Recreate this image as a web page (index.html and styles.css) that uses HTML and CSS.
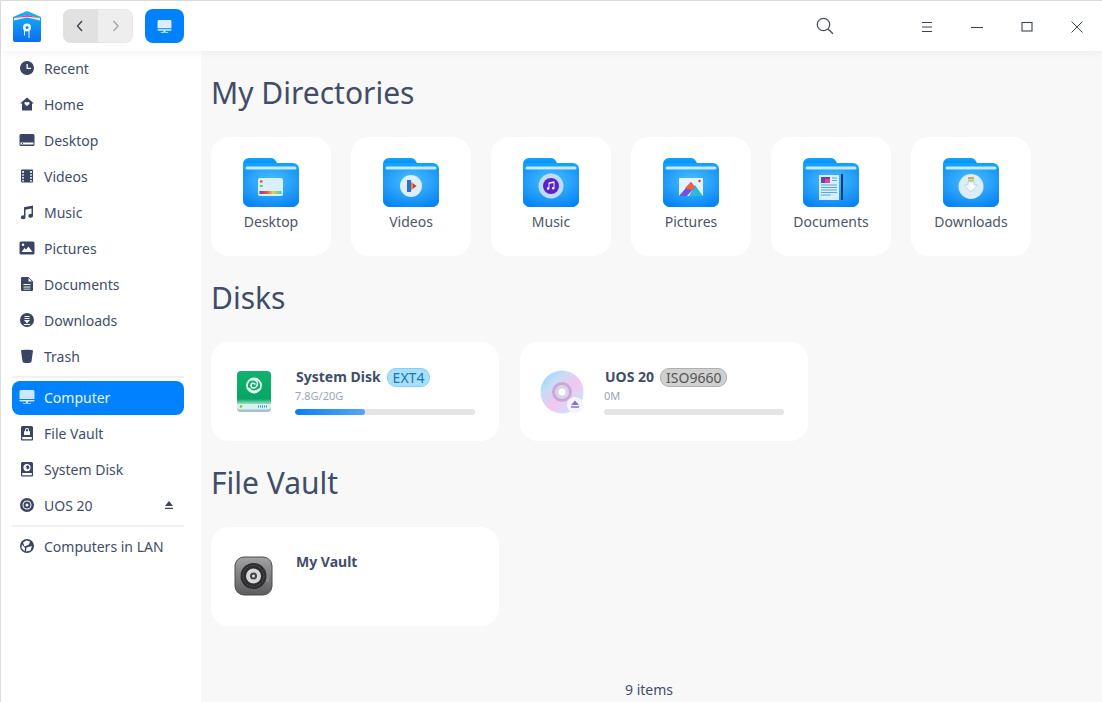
FILE: index.html
```html
<!DOCTYPE html>
<html lang="en">
<head>
<meta charset="utf-8">
<title>File Manager</title>
<link rel="stylesheet" href="styles.css">
</head>
<body>
<svg class="defs" width="0" height="0" aria-hidden="true">
  <defs>
    <linearGradient id="folderBack" x1="0" y1="0" x2="0" y2="1"><stop offset="0" stop-color="#12a4fb"/><stop offset="1" stop-color="#0a8cf5"/></linearGradient>
    <radialGradient id="folderFront" cx="0.5" cy="0.3" r="0.75"><stop offset="0" stop-color="#4cc0ff"/><stop offset="1" stop-color="#0684f4"/></radialGradient>
    <linearGradient id="rainbow" x1="0" x2="1"><stop offset="0" stop-color="#7a3bd0"/><stop offset=".35" stop-color="#e8603a"/><stop offset=".6" stop-color="#d8d83a"/><stop offset="1" stop-color="#3ac8e0"/></linearGradient>
    <linearGradient id="green" x1="0" y1="0" x2="0" y2="1"><stop offset="0" stop-color="#12b26c"/><stop offset=".68" stop-color="#07a566"/><stop offset=".84" stop-color="#c5efdd"/><stop offset="1" stop-color="#d8f2ea"/></linearGradient>
    <linearGradient id="disc" x1="0" y1="0" x2="1" y2="1"><stop offset="0" stop-color="#84d8f8"/><stop offset=".3" stop-color="#c8dcf6"/><stop offset=".55" stop-color="#f6c4ee"/><stop offset=".8" stop-color="#cfe0f6"/><stop offset="1" stop-color="#8ce6f4"/></linearGradient>
    <linearGradient id="steel" x1="0" y1="0" x2="0" y2="1"><stop offset="0" stop-color="#a2a2a4"/><stop offset="1" stop-color="#5c5c5e"/></linearGradient>
    <linearGradient id="logo" x1="0" y1="0" x2="0" y2="1"><stop offset="0" stop-color="#16b4fa"/><stop offset="1" stop-color="#0a6cf0"/></linearGradient>
    <symbol id="folder" viewBox="0 0 56 49">
      <path d="M0 6a6 6 0 0 1 6-6h22c2.500 0 3.500 1 4.500 2.500L34 5h-34z" fill="url(#folderBack)"/>
      <path d="M0 5h50a6 6 0 0 1 6 6v31a7 7 0 0 1-7 7H7a7 7 0 0 1-7-7z" fill="url(#folderBack)"/>
      <rect x="2.500" y="8.500" width="51" height="3" rx="1.500" fill="#c8e9ff"/>
      <path d="M0 12h56v30a7 7 0 0 1-7 7H7a7 7 0 0 1-7-7z" fill="url(#folderFront)"/>
    </symbol>
    <symbol id="monitor" viewBox="0 0 16 14">
      <path d="M2 0h12a1.500 1.500 0 0 1 1.500 1.500V9H.5V1.500A1.500 1.500 0 0 1 2 0zM.5 10h15v.5a1 1 0 0 1-1 1h-13a1 1 0 0 1-1-1zM7 11.500h2V13H7zM4 13h8v.8H4z" fill="currentColor"/>
    </symbol>
  </defs>
</svg>
<div class="window">
  <header class="titlebar">
    <svg class="logo" width="28" height="31" viewBox="0 0 28 31">
      <path d="M0 6 12.500.5c1-.4 2-.4 3 0L28 6v23a2 2 0 0 1-2 2H2a2 2 0 0 1-2-2z" fill="url(#logo)"/>
      <path d="M1 7 14 4l13 3v2.500L14 6.500 1 9.500z" fill="#f3e6ee"/>
      <path d="M1 7 14 4l13 3-13-1.200z" fill="#d8447c"/>
      <circle cx="14" cy="16.500" r="4" fill="#f2fbff"/>
      <circle cx="14" cy="16.500" r="1.500" fill="#1b88ee"/>
      <path d="M11.500 19.500v5M16 20v7" stroke="#e9f6ff" stroke-width="1" fill="none"/>
    </svg>
    <div class="nav">
      <button class="nav-btn nav-active" type="button"><svg width="10" height="14" viewBox="0 0 10 14"><path d="M6 2 1.500 7 6 12" fill="none" stroke="#3c4658" stroke-width="1.400"/></svg></button>
      <button class="nav-btn" type="button"><svg width="10" height="14" viewBox="0 0 10 14"><path d="M2.500 2 7 7l-4.500 5" fill="none" stroke="#a3a7ad" stroke-width="1.400"/></svg></button>
    </div>
    <div class="crumb"><svg class="crumb-icon" width="15" height="13"><use href="#monitor" width="15" height="13"/></svg></div>
    <div class="title-actions">
      <svg class="search" width="18" height="18" viewBox="0 0 18 18"><circle cx="7.500" cy="7.500" r="6.200" fill="none" stroke="#4a5260" stroke-width="1.300"/><path d="m12 12 5 4.800" stroke="#4a5260" stroke-width="1.500"/></svg>
      <svg class="win-ico ico-menu" width="12" height="12" viewBox="0 0 12 12"><path d="M1 1.500h10M1 6h10M1 10.500h10" stroke="#3d4552" stroke-width="1"/></svg>
      <svg class="win-ico ico-min" width="12" height="12" viewBox="0 0 12 12"><path d="M0 6.500h12" stroke="#3d4552" stroke-width="1.100"/></svg>
      <svg class="win-ico ico-max" width="12" height="12" viewBox="0 0 12 12"><rect x="1" y="1.500" width="10" height="8.500" fill="none" stroke="#3d4552" stroke-width="1.100"/></svg>
      <svg class="win-ico ico-close" width="14" height="14" viewBox="0 0 14 14"><path d="m1.500 1.500 11 11m0-11-11 11" stroke="#3d4552" stroke-width="1"/></svg>
    </div>
  </header>
  <div class="content">
    <nav class="sidebar">
      <a class="side-item"><svg class="side-ico" viewBox="0 0 16 16"><path fill-rule="evenodd" d="M8 1a7 7 0 1 1 0 14A7 7 0 0 1 8 1zM7.500 4v5H12V7.800H8.800V4z"/></svg>Recent</a>
      <a class="side-item"><svg class="side-ico" viewBox="0 0 16 16"><path fill-rule="evenodd" d="M8 1.500 15 7.500h-2V14.500H3V7.500H1zM8 6.500c-1-1-3-.5-2.500 1 .3 1 1.500 1.700 2.500 2.500 1-.8 2.200-1.500 2.500-2.500.5-1.500-1.500-2-2.500-1z"/></svg>Home</a>
      <a class="side-item"><svg class="side-ico" viewBox="0 0 16 16"><path fill-rule="evenodd" d="M2 2h12a1.500 1.500 0 0 1 1.500 1.500v9A1.500 1.500 0 0 1 14 14H2a1.500 1.500 0 0 1-1.500-1.500v-9A1.500 1.500 0 0 1 2 2zM1.500 10.500v2h13v-2zM3 11h1v1H3z"/></svg>Desktop</a>
      <a class="side-item"><svg class="side-ico" viewBox="0 0 16 16"><path fill-rule="evenodd" d="M3 1.500h10a1 1 0 0 1 1 1v11a1 1 0 0 1-1 1H3a1 1 0 0 1-1-1v-11a1 1 0 0 1 1-1zM3.200 3v2h1.600V3zm0 3.200v1.600h1.600V6.200zm0 2.800v1.800h1.600V9zm0 3v1.500h1.600V12zm8-9v2h1.600V3zm0 3.200v1.600h1.600V6.200zm0 2.800v1.800h1.600V9zm0 3v1.500h1.600V12z"/></svg>Videos</a>
      <a class="side-item"><svg class="side-ico" viewBox="0 0 16 16"><path d="M5 3.200 14 1.500v10.200a2.300 2 0 1 1-1.500-1.800V4.500L6.500 5.700v7.500a2.300 2 0 1 1-1.500-1.800z"/></svg>Music</a>
      <a class="side-item"><svg class="side-ico" viewBox="0 0 16 16"><path fill-rule="evenodd" d="M2 1.500h12a1.500 1.500 0 0 1 1.500 1.500v10a1.500 1.500 0 0 1-1.500 1.500H2A1.500 1.500 0 0 1 .5 13V3A1.500 1.500 0 0 1 2 1.500zM2.500 12h11L9.500 6.500l-2.500 3-1.500-1.500zM4 3.500a1.300 1.300 0 1 0 0 2.600 1.300 1.300 0 0 0 0-2.600z"/></svg>Pictures</a>
      <a class="side-item"><svg class="side-ico" viewBox="0 0 16 16"><path fill-rule="evenodd" d="M3 1h6.500L14 5.500V14a1 1 0 0 1-1 1H3a1 1 0 0 1-1-1V2a1 1 0 0 1 1-1zM9.500 2v3.500H13zM4.500 8v1h7V8zm0 2.500v1h7v-1zm0 2.200v.9h7v-.9z"/></svg>Documents</a>
      <a class="side-item"><svg class="side-ico" viewBox="0 0 16 16"><path fill-rule="evenodd" d="M8 1a7 7 0 1 1 0 14A7 7 0 0 1 8 1zM5.500 4v1h5V4zm0 2v1h5V6zM5 8l3 3.500L11 8zm-.2 4v.9h6.400V12z"/></svg>Downloads</a>
      <a class="side-item"><svg class="side-ico" viewBox="0 0 16 16"><path d="M2 2.500c0-1 12-1 12 0L12.500 13.500c-.3 2-8.700 2-9 0z"/></svg>Trash</a>
      <div class="side-sep"></div>
      <a class="side-item side-active"><svg class="side-ico" viewBox="0 0 16 14"><use href="#monitor"/></svg>Computer</a>
      <a class="side-item"><svg class="side-ico" viewBox="0 0 16 16"><path fill-rule="evenodd" d="M3.500 1h9A1.500 1.500 0 0 1 14 2.500v12a1 1 0 0 1-1 1H3a1 1 0 0 1-1-1v-12A1.500 1.500 0 0 1 3.500 1zM8 3a2 2 0 0 0-2 2v1.200H5V10h6V6.200h-1V5a2 2 0 0 0-2-2zm0 1a1 1 0 0 1 1 1v1.200H7V5a1 1 0 0 1 1-1zM3.200 12v2.200h9.600V12z"/></svg>File Vault</a>
      <a class="side-item"><svg class="side-ico" viewBox="0 0 16 16"><path fill-rule="evenodd" d="M3.500 1h9A1.500 1.500 0 0 1 14 2.500v12a1 1 0 0 1-1 1H3a1 1 0 0 1-1-1v-12A1.500 1.500 0 0 1 3.500 1zM8 3a3.600 3.600 0 1 0 0 7.200A3.600 3.600 0 0 0 8 3zm0 1.200c1.500 0 2.400 1.200 2.400 2.400 0 .8-.7 1.700-1.800 1.700-1.400 0-1.600-1.800-.4-1.900-.8-.5-1.200-.1-1.500.3 0-1.300 .9-2.500 1.900-2.500zM3.200 12v2.200h9.600V12z"/></svg>System Disk</a>
      <a class="side-item"><svg class="side-ico" viewBox="0 0 16 16"><path fill-rule="evenodd" d="M8 1a7 7 0 1 1 0 14A7 7 0 0 1 8 1zm0 2.500a4.500 4.500 0 1 0 0 9 4.500 4.500 0 0 0 0-9zm0 1a3.500 3.500 0 1 1 0 7 3.500 3.500 0 0 1 0-7zM8 6.500a1.500 1.500 0 1 0 0 3 1.500 1.500 0 0 0 0-3z"/></svg>UOS 20<svg class="eject" width="10" height="10" viewBox="0 0 10 10"><path d="M5 1 9 6H1zM1 7.800h8V9H1z" fill="#3d4552"/></svg></a>
      <div class="side-sep"></div>
      <a class="side-item"><svg class="side-ico" viewBox="0 0 16 16"><path fill-rule="evenodd" d="M8 1a7 7 0 1 1 0 14A7 7 0 0 1 8 1zM7.500 2.500 4 4.500l1.500 4L10 6.500 11 3.500zM3 6.500 2.500 10l3 3.200.5-3.200zM7.500 9.500 7 13.500l4.500-1 1.500-4.500z"/></svg>Computers in LAN</a>
    </nav>
    <main class="main">
      <h2 class="section-title">My Directories</h2>
      <div class="tiles">
        <div class="tile">
          <svg class="folder" viewBox="0 0 56 49"><use href="#folder" width="56" height="49"/><rect x="15" y="20" width="25" height="18" rx="2" fill="#d8f0fc"/><rect x="16.500" y="33" width="22" height="3" fill="url(#rainbow)"/><rect x="17" y="22.500" width="2.500" height="2" fill="#e0403c"/><rect x="17" y="27" width="2.500" height="2" fill="#6dbd4a"/></svg>
          <span class="tile-label">Desktop</span>
        </div>
        <div class="tile">
          <svg class="folder" viewBox="0 0 56 49"><use href="#folder" width="56" height="49"/><circle cx="28" cy="28" r="11" fill="#dcedfb"/><path d="M24 22h4v12h-4z" fill="#2a6fe0"/><path d="M28 23.500 33 28l-5 4.500z" fill="#f08a24"/><path d="M30 25.500 33.500 28 30 30.500z" fill="#d8305c"/></svg>
          <span class="tile-label">Videos</span>
        </div>
        <div class="tile">
          <svg class="folder" viewBox="0 0 56 49"><use href="#folder" width="56" height="49"/><circle cx="28" cy="28" r="12.500" fill="#bcdcf8"/><circle cx="28" cy="28" r="8" fill="#5a22c8"/><path d="M25.500 24.500 31.500 23.300v7a1.300 1.200 0 1 1-.9-1.100v-4.300l-4.200.9v4.700a1.300 1.200 0 1 1-.9-1.100z" fill="#fff"/></svg>
          <span class="tile-label">Music</span>
        </div>
        <div class="tile">
          <svg class="folder" viewBox="0 0 56 49"><use href="#folder" width="56" height="49"/><path d="M17 20h22a1 1 0 0 1 1 1v17H16V21a1 1 0 0 1 1-1z" fill="#e3f3fc"/><circle cx="36.500" cy="23" r="1.200" fill="#e02050"/><path d="M40 38H26l6-11z" fill="#30b8d8"/><path d="M16 38h8l8-9-4-5z" fill="#7050e0"/><path d="M22 30l6-6 4 5-3 3z" fill="#f0603c"/></svg>
          <span class="tile-label">Pictures</span>
        </div>
        <div class="tile">
          <svg class="folder" viewBox="0 0 56 49"><use href="#folder" width="56" height="49"/><rect x="16" y="17" width="20" height="25" fill="#d9eefb"/><rect x="18" y="19" width="9" height="6" fill="#6a40b8"/><rect x="22" y="21" width="5" height="4" fill="#e04a80"/><path d="M29 20h5M29 22.500h5M18 27h16M18 29.500h16M18 32h16M18 34.500h16M18 37h10" stroke="#55a8e8" stroke-width="1"/><rect x="38" y="16" width="2" height="26" fill="#0c3c78"/></svg>
          <span class="tile-label">Documents</span>
        </div>
        <div class="tile">
          <svg class="folder" viewBox="0 0 56 49"><use href="#folder" width="56" height="49"/><circle cx="28" cy="28.500" r="12.500" fill="#dcecf8"/><rect x="25" y="19" width="6" height="2" fill="#e8a060"/><rect x="25" y="21.500" width="6" height="2" fill="#a8d870"/><path d="M25 24h6v3h3.500L28 34l-6.500-7H25z" fill="#fff" stroke="#a9d4f2" stroke-width=".8"/></svg>
          <span class="tile-label">Downloads</span>
        </div>
      </div>
      <h2 class="section-title">Disks</h2>
      <div class="cards">
        <div class="card">
          <svg class="card-ico" width="48" height="48" viewBox="0 0 48 48">
            <rect x="8" y="3" width="34" height="41" rx="4" fill="url(#green)"/>
            <path d="M8 38h34v2a4 4 0 0 1-4 4H12a4 4 0 0 1-4-4z" fill="#a9bcd8"/>
            <path d="M8 36h34v2.500a3 3 0 0 1-3 3H11a3 3 0 0 1-3-3z" fill="#d8f2ea"/>
            <circle cx="12" cy="38.500" r="1.300" fill="#78c820"/>
            <path d="M29 38.500h10" stroke="#2a8ce0" stroke-width="2" stroke-dasharray="1 1"/>
            <circle cx="25" cy="17.500" r="7" fill="none" stroke="#eafff6" stroke-width="1.800"/>
            <path d="M22 12c5-1 7.500 2 6 5.500s-6 3-6 0 3.500-2.500 4.500-1M30 21c-3 3-8 3-10-1" fill="none" stroke="#eafff6" stroke-width="1.500"/>
          </svg>
          <div class="card-body">
            <div class="card-head"><span class="card-name">System Disk</span><span class="tag tag-blue">EXT4</span></div>
            <div class="card-size">7.8G/20G</div>
            <div class="progress"><div class="progress-fill" style="width:39%"></div></div>
          </div>
        </div>
        <div class="card">
          <svg class="card-ico" width="48" height="48" viewBox="0 0 48 48">
            <circle cx="24" cy="24" r="21.500" fill="url(#disc)"/>
            <circle cx="24" cy="24" r="10" fill="#c9a9d9"/>
            <circle cx="24" cy="24" r="7" fill="#dcd4e4"/>
            <circle cx="24" cy="24" r="3.500" fill="#fff"/>
            <circle cx="37" cy="37" r="8" fill="#f4f4fa"/>
            <path d="M37 32.500 41 37h-8zM33 38.200h8v1.500h-8z" fill="#8a72c8"/>
          </svg>
          <div class="card-body">
            <div class="card-head"><span class="card-name">UOS 20</span><span class="tag tag-gray">ISO9660</span></div>
            <div class="card-size">0M</div>
            <div class="progress"></div>
          </div>
        </div>
      </div>
      <h2 class="section-title">File Vault</h2>
      <div class="cards">
        <div class="card">
          <svg class="card-ico" width="48" height="48" viewBox="0 0 48 48">
            <rect x="6" y="4" width="37" height="38" rx="9" fill="url(#steel)" stroke="#4d4d50"/>
            <rect x="37" y="17" width="3" height="12" rx="1" fill="#8a8a8c"/>
            <circle cx="24.500" cy="23" r="13" fill="#2e2e30"/>
            <circle cx="24.500" cy="23" r="10.500" fill="none" stroke="#666" stroke-width="1" stroke-dasharray="1 1.500"/>
            <circle cx="24.500" cy="23" r="7.500" fill="#d8d8d8"/>
            <circle cx="24.500" cy="23" r="3.500" fill="#444"/>
            <circle cx="24.500" cy="23" r="1.500" fill="#ddd"/>
          </svg>
          <div class="card-body">
            <div class="card-head"><span class="card-name">My Vault</span></div>
          </div>
        </div>
      </div>
      <div class="status">9 items</div>
    </main>
  </div>
</div>
</body>
</html>
```
FILE: styles.css
```css
* { box-sizing: border-box; }
html, body { margin: 0; height: 100%; }
body { font-family: "Noto Sans", sans-serif; color: #414d68; overflow: hidden; background: #fff; }
.defs { position: absolute; }
.window { width: 1102px; height: 702px; display: flex; flex-direction: column; border-top: 1px solid #dedede; border-left: 1px solid #dedede; }

.titlebar { height: 50px; flex: none; display: flex; align-items: center; background: #fff; position: relative; z-index: 2; box-shadow: 0 2px 8px rgba(0,0,0,.05); }
.logo { margin-left: 12px; flex: none; }
.nav { display: flex; margin-left: 22px; width: 70px; height: 34px; border-radius: 8px; overflow: hidden; background: #eeeeee; box-shadow: inset 0 0 0 1px rgba(0,0,0,.02); }
.nav-btn { flex: 1; border: 0; padding: 0; background: transparent; display: flex; align-items: center; justify-content: center; }
.nav-active { background: #e1e1e1; flex: 0 0 35px; }
.crumb { margin-left: 12px; width: 39px; height: 34px; border-radius: 8px; background: #0081ff; display: flex; align-items: center; justify-content: center; }
.crumb-icon { color: #dcedff; }
.title-actions { margin-left: auto; display: flex; align-items: center; }
.search { margin-right: 87px; }
.win-ico { flex: none; margin-top: 2px; }
.ico-menu { margin-right: 38px; }
.ico-min { margin-right: 38px; }
.ico-max { margin-right: 37px; }
.ico-close { margin-right: 18px; }

.content { flex: 1; display: flex; min-height: 0; }
.sidebar { width: 200px; flex: none; background: #fff; padding: 0 17px 0 11px; margin-top: -1px; }
.side-item { position: relative; display: flex; align-items: center; height: 36px; padding-left: 7px; font-size: 14px; color: #414d68; }
.side-ico { width: 16px; height: 16px; flex: none; margin-right: 9px; fill: #3a4463; color: #3a4463; }
.eject { position: absolute; right: 10px; top: 13px; }
.side-sep { height: 2px; margin: 2px 0 1px; background: #f1f1f1; }
.side-item.side-active { height: 34px; margin-top: 3px; padding-bottom: 2px; background: #0081ff; color: #eaf4ff; border-radius: 8px; }
.side-active .side-ico { color: #cfe6ff; fill: #cfe6ff; }

.main { flex: 1; min-width: 0; background: #f8f8f8; padding: 0 0 0 10px; display: flex; flex-direction: column; }
.section-title { margin: 21px 0 24px; font-weight: 400; font-size: 30px; line-height: 41px; color: #414d68; }
.tiles { display: flex; gap: 20px; }
.tile { width: 120px; height: 119px; background: #fff; border-radius: 18px; display: flex; flex-direction: column; align-items: center; padding-top: 21px; }
.folder { width: 56px; height: 49px; display: block; }
.tile-label { font-size: 14px; line-height: 19px; margin-top: 5px; color: #4d5568; }
.cards { display: flex; gap: 21px; }
.card { width: 288px; height: 99px; background: #fff; border-radius: 18px; display: flex; padding: 0 24px 0 18px; position: relative; }
.card-ico { flex: none; margin-top: 26px; }
.card-body { flex: 1; min-width: 0; margin-left: 18px; padding-top: 25px; }
.card-head { display: flex; align-items: center; height: 20px; gap: 6px; padding-left: 1px; }
.card-name { font-size: 14px; font-weight: 700; color: #414d68; line-height: 20px; }
.tag { font-size: 14px; line-height: 17px; border-radius: 9px; padding: 0 5px; border: 1px solid; }
.tag-blue { background: #a7e0ff; border-color: #88cdf5; color: #1b74b0; }
.tag-gray { background: #d0d0d0; border-color: #b0b0b0; color: #555; }
.card-size { font-size: 11px; line-height: 15px; margin-top: 1px; color: #9aa5b8; }
.progress { height: 6px; border-radius: 3px; background: #e4e4e4; margin-top: 6px; overflow: hidden; }
.progress-fill { height: 100%; border-radius: 3px; background: linear-gradient(90deg, #0a80f5, #55a6f5); }
.status { margin-top: auto; margin-right: 15px; margin-bottom: 1px; height: 22px; line-height: 22px; text-align: center; font-size: 14px; color: #414d68; }
```
